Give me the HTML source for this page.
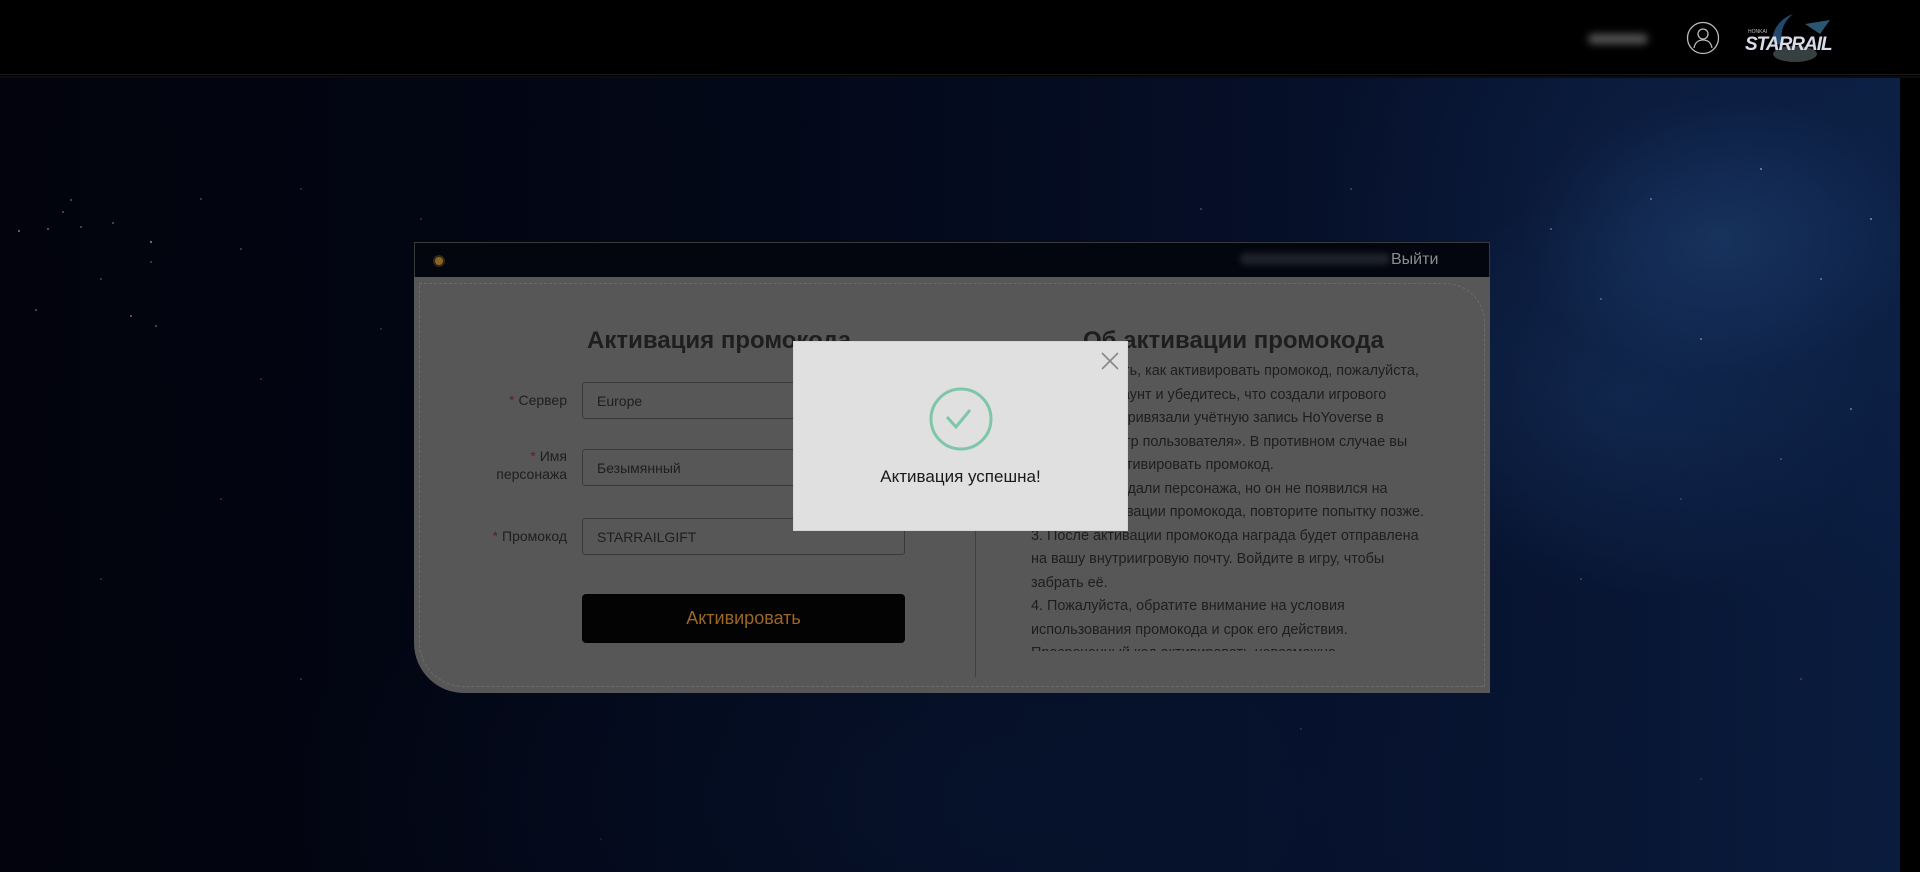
<!DOCTYPE html>
<html><head><meta charset="utf-8"><style>
*{margin:0;padding:0;box-sizing:border-box}
body{width:1920px;height:872px;overflow:hidden;background:#000;font-family:"Liberation Sans",Arial,sans-serif;position:relative}
.top{position:absolute;left:0;top:0;width:1920px;height:75px;background:#000;border-bottom:1px solid #1a1a1a}
.line{position:absolute;left:0;top:76px;width:1920px;height:2px;background:#0c0c0c}
.bg{position:absolute;left:0;top:78px;width:1900px;height:794px;
background:
radial-gradient(ellipse 200px 140px at 1720px 160px,rgba(35,70,120,.45),transparent),
radial-gradient(ellipse 260px 200px at 1620px 320px,rgba(25,55,100,.4),transparent),
radial-gradient(ellipse 450px 380px at 1760px 150px,rgba(18,42,85,.5),transparent),
radial-gradient(ellipse 700px 400px at 1000px 720px,rgba(8,24,55,.5),transparent),
linear-gradient(90deg,#02030c 0%,#030818 40%,#06102a 70%,#0a1c3e 100%);}
.stars{position:absolute;left:0;top:0;width:2px;height:2px;border-radius:50%;background:transparent;
box-shadow:47px 150px #667,62px 133px #556,80px 148px #556,18px 152px #778,150px 163px #889,112px 144px #556,130px 237px #668,35px 231px #557,150px 183px #445,70px 121px #556,100px 200px #445,155px 247px #556,200px 120px #445,240px 170px #445,260px 300px #334,300px 110px #334,380px 250px #334,420px 140px #334,500px 200px #223,1200px 130px #446,1300px 200px #446,1350px 110px #446,1420px 250px #557,1480px 180px #557,1550px 150px #668,1600px 220px #668,1650px 120px #779,1700px 260px #779,1760px 90px #88a,1820px 200px #779,1870px 140px #88a,1850px 330px #779,1780px 380px #557,1680px 420px #446,1580px 500px #446,1800px 600px #446,1700px 700px #334,1300px 650px #334,600px 760px #223,300px 600px #334,100px 500px #334,220px 420px #334}
.panel{position:absolute;left:414px;top:242px;width:1076px;height:451px}
.ph{position:absolute;left:0;top:0;width:1076px;height:35px;background:#04060f;border:1px solid #3a3a3a;border-bottom:none}
.dot{position:absolute;left:20px;top:14px;width:8px;height:8px;border-radius:50%;background:#8a6420;box-shadow:0 0 0 2px rgba(138,100,32,.35)}
.mail{position:absolute;left:825px;top:10px;width:150px;height:12px;background:#1e2129;filter:blur(3px);border-radius:6px}
.exit{position:absolute;left:976px;top:8px;color:#8d8d8d;font-size:16px}
.pb{position:absolute;left:0;top:35px;width:1076px;height:416px;background:#575757;border-bottom-left-radius:50px;overflow:hidden}
.dash{position:absolute;left:5px;top:6px;right:5px;bottom:6px;border:1px dashed #6c6c6c;border-bottom-left-radius:45px;border-top-right-radius:40px}
h2{position:absolute;font-size:24px;color:#1e1e1e;font-weight:bold;white-space:nowrap}
.lab{position:absolute;right:calc(1076px - 153px);color:#1e1e1e;font-size:14px;text-align:right;line-height:18px}
.lab b{color:#7a1616;font-weight:normal}
.inp{position:absolute;left:168px;width:323px;height:37px;border:1px solid #3a3a3a;border-radius:3px;background:#575757;color:#1e1e1e;font-size:14px;padding:10px 14px}
.btn{position:absolute;left:168px;top:317px;width:323px;height:49px;background:#030303;border-radius:4px;color:#9c6626;font-size:18px;text-align:center;line-height:49px}
.vl{position:absolute;left:561px;top:150px;width:1px;height:250px;background:#404040}
.txt{position:absolute;left:617px;top:83px;width:420px;height:291px;overflow:hidden;color:#1e1e1e;font-size:14.4px;line-height:23.5px;white-space:nowrap}
.modal{position:absolute;left:793px;top:341px;width:335px;height:190px;background:#e0e0e0;border:1px solid #d6d6d6}
.msg{position:absolute;left:0;width:100%;top:125px;text-align:center;font-size:17px;color:#1a1a1a}
</style></head><body>
<div class="top">
 <div style="position:absolute;left:1588px;top:34px;width:60px;height:10px;background:#555;filter:blur(4px);border-radius:5px"></div>
 <svg style="position:absolute;left:1686px;top:21px" width="34" height="34" viewBox="0 0 34 34"><circle cx="17" cy="17" r="15.5" fill="none" stroke="#bbb" stroke-width="1.3"/><circle cx="17" cy="13" r="5" fill="none" stroke="#bbb" stroke-width="1.3"/><path d="M8 27c1-6 5-8 9-8s8 2 9 8" fill="none" stroke="#bbb" stroke-width="1.3"/></svg>
 <svg style="position:absolute;left:1735px;top:12px" width="110" height="52" viewBox="0 0 110 52"><path d="M38 30C36 18 46 6 58 2C48 10 44 22 48 34Z" fill="#2a5a8a" opacity=".8"/><ellipse cx="60" cy="42" rx="22" ry="8" fill="#5a6a6a" opacity=".6"/><path d="M70 12L95 8L85 22Z" fill="#3a7aa0" opacity=".7"/><text x="10" y="38" font-family="Liberation Sans" font-style="italic" font-weight="bold" font-size="19" fill="#d8dce8" letter-spacing="-1">STARRAIL</text><text x="13" y="21" font-family="Liberation Sans" font-size="5" fill="#bbb">HONKAI</text></svg>
</div>
<div class="line"></div>
<div class="bg"><div class="stars"></div></div>
<div class="panel">
 <div class="ph"><div class="dot"></div><div class="mail"></div><div class="exit">Выйти</div></div>
 <div class="pb">
  <div class="dash"></div>
  <h2 style="left:173px;top:50px">Активация промокода</h2>
  <h2 style="left:669px;top:50px">Об активации промокода</h2>
  <div class="lab" style="top:114px"><b>*</b> Сервер</div>
  <div class="inp" style="top:105px">Europe</div>
  <div class="lab" style="top:170px"><b>*</b> Имя<br>персонажа</div>
  <div class="inp" style="top:172px">Безымянный</div>
  <div class="lab" style="top:250px"><b>*</b> Промокод</div>
  <div class="inp" style="top:241px">STARRAILGIFT</div>
  <div class="btn">Активировать</div>
  <div class="vl"></div>
  <div class="txt">1. Чтобы узнать, как активировать промокод, пожалуйста,<br>войдите в аккаунт и убедитесь, что создали игрового<br>персонажа и привязали учётную запись HoYoverse в<br>разделе «Центр пользователя». В противном случае вы<br>не сможете активировать промокод.<br>2. Если вы создали персонажа, но он не появился на<br>странице активации промокода, повторите попытку позже.<br>3. После активации промокода награда будет отправлена<br>на вашу внутриигровую почту. Войдите в игру, чтобы<br>забрать её.<br>4. Пожалуйста, обратите внимание на условия<br>использования промокода и срок его действия.<br>Просроченный код активировать невозможно.</div>
 </div>
</div>
<div class="modal">
 <svg style="position:absolute;left:306px;top:9px" width="20" height="20" viewBox="0 0 20 20"><path d="M2 2L18 18M18 2L2 18" stroke="#888" stroke-width="1.6"/></svg>
 <svg style="position:absolute;left:134px;top:44px" width="66" height="66" viewBox="0 0 66 66"><circle cx="33" cy="33" r="30" fill="none" stroke="#7dc6a8" stroke-width="3"/><path d="M19 31L28 41L42 24" fill="none" stroke="#7dc6a8" stroke-width="3"/></svg>
 <div class="msg">Активация успешна!</div>
</div>
</body></html>
